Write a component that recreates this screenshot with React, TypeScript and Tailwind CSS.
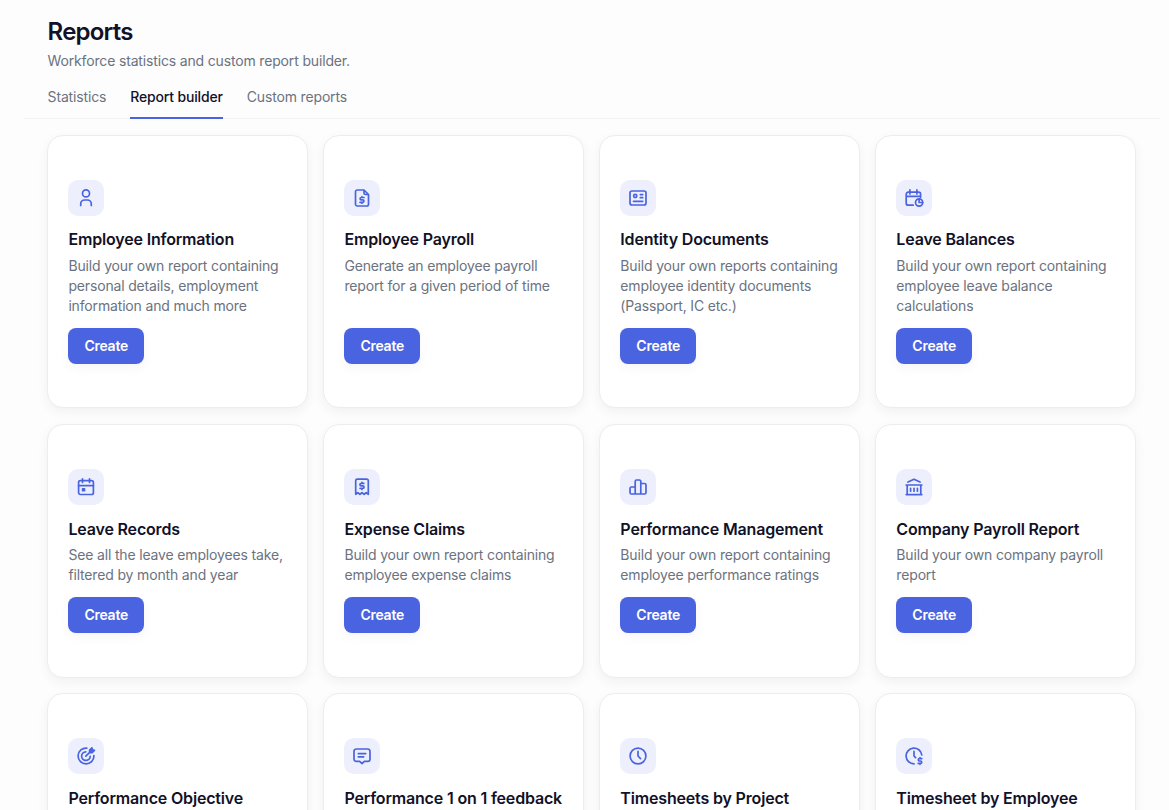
import { ReactNode } from "react";

function Icon({ children }: { children: ReactNode }) {
  return (
    <svg
      viewBox="0 0 20 20"
      className="h-5 w-5"
      fill="none"
      stroke="currentColor"
      strokeWidth="1.7"
      strokeLinecap="round"
      strokeLinejoin="round"
    >
      {children}
    </svg>
  );
}

const icons = {
  person: (
    <Icon>
      <circle cx="10" cy="5.4" r="3.5" />
      <path d="M4.7 17.5v-1.6a3.9 3.9 0 0 1 3.9-3.9h2.8a3.9 3.9 0 0 1 3.9 3.9v1.6" />
    </Icon>
  ),
  payroll: (
    <Icon>
      <path d="M12 2H5.2a1.7 1.7 0 0 0-1.7 1.7v12.6A1.7 1.7 0 0 0 5.2 18h9.6a1.7 1.7 0 0 0 1.7-1.7V6.5L12 2Zm0 0v3a1.5 1.5 0 0 0 1.5 1.5h3" />
      <path d="M12 9.5H9.3a1.2 1.2 0 0 0 0 2.4h1.4a1.2 1.2 0 0 1 0 2.4H8M10 8.6v.9m0 4.8v.9" />
    </Icon>
  ),
  identity: (
    <Icon>
      <rect x="2" y="3" width="16" height="14" rx="2" />
      <circle cx="7.2" cy="8" r="1.6" />
      <path d="M12.3 6.6h2.4m-2.4 3.1h2.4M5.5 13.3h9.2" />
    </Icon>
  ),
  balance: (
    <Icon>
      <path d="M9.2 17.2H4.2a2 2 0 0 1-2-2v-9a2 2 0 0 1 2-2h10.4a2 2 0 0 1 2 2v3M2.2 8.3h14.4M5.9 1.9v4m7-4v4" />
      <circle cx="15.1" cy="14.5" r="3.6" />
      <path d="M15.1 11v3.5h3.5" />
    </Icon>
  ),
  calendar: (
    <Icon>
      <rect x="2.6" y="3.7" width="14.8" height="13.8" rx="1.8" />
      <path d="M2.6 8.6h14.8M6.5 1.8v3.7m7-3.7v3.7" />
      <path d="M6.6 11.8h1.9v1.9H6.6z" fill="currentColor" />
    </Icon>
  ),
  receipt: (
    <Icon>
      <path d="M3.7 17.3V3.7a1.6 1.6 0 0 1 1.6-1.6h9.4a1.6 1.6 0 0 1 1.6 1.6v13.6l-2.1-1.6-2.1 1.6-2.1-1.6-2.1 1.6-2.1-1.6-2.1 1.6Z" />
      <path d="M11.8 6.4H9.2a1.25 1.25 0 0 0 0 2.5h1.6a1.25 1.25 0 0 1 0 2.5H8.1M10 5.3v1.1m0 5v1.1" />
    </Icon>
  ),
  chart: (
    <Icon>
      <path d="M7.2 17V4.4A1.4 1.4 0 0 1 8.6 3h2.8a1.4 1.4 0 0 1 1.4 1.4V17M7.2 10H3.4A1.4 1.4 0 0 0 2 11.4v4.2A1.4 1.4 0 0 0 3.4 17h13.2a1.4 1.4 0 0 0 1.4-1.4V7.9a1.4 1.4 0 0 0-1.4-1.4h-3.8" />
    </Icon>
  ),
  bank: (
    <Icon>
      <path d="M4 5.1 10 2.2l6 2.9M2.2 8h15.6M2.2 17.6h15.6M3.2 8v9.6M16.8 8v9.6M6.6 11.3v2.9m3.4-2.9v2.9m3.4-2.9v2.9" />
    </Icon>
  ),
  objective: (
    <Icon>
      <path d="M10.8 2.1A7.9 7.9 0 1 0 17.9 9.5" />
      <path d="M9.8 5.8A4.3 4.3 0 1 0 14.2 10.4" />
      <path d="M9.8 10.2 15.8 4.3M13.6 6.4V4.1l2.3-2.3.5 2 2 .5-2.3 2.3Z" />
    </Icon>
  ),
  feedback: (
    <Icon>
      <path d="M4.2 3h11.6a2.2 2.2 0 0 1 2.2 2.2v8a2.2 2.2 0 0 1-2.2 2.2h-3.4L10 17.5l-2.4-2.1H4.2A2.2 2.2 0 0 1 2 13.2v-8A2.2 2.2 0 0 1 4.2 3Z" />
      <path d="M6.3 7.6h7.4m-7.4 3.2h5.4" />
    </Icon>
  ),
  clock: (
    <Icon>
      <circle cx="10" cy="10" r="7.9" />
      <path d="M10 5.4V10l2.5 2.7" />
    </Icon>
  ),
  clockMoney: (
    <Icon>
      <path d="M17.8 8.8A7.9 7.9 0 1 0 10 17.9" />
      <path d="M10 5.4V10l1.6 1.7M17.8 12.6h-2.3a1.2 1.2 0 0 0 0 2.4h1a1.2 1.2 0 0 1 0 2.4h-2.3M16 11.7v.9m0 4.8v.9" />
    </Icon>
  ),
};

type Report = {
  icon: keyof typeof icons;
  title: string;
  description?: string;
};

const reports: Report[] = [
  {
    icon: "person",
    title: "Employee Information",
    description:
      "Build your own report containing personal details, employment information and much more",
  },
  {
    icon: "payroll",
    title: "Employee Payroll",
    description: "Generate an employee payroll report for a given period of time",
  },
  {
    icon: "identity",
    title: "Identity Documents",
    description:
      "Build your own reports containing employee identity documents (Passport, IC etc.)",
  },
  {
    icon: "balance",
    title: "Leave Balances",
    description: "Build your own report containing employee leave balance calculations",
  },
  {
    icon: "calendar",
    title: "Leave Records",
    description: "See all the leave employees take, filtered by month and year",
  },
  {
    icon: "receipt",
    title: "Expense Claims",
    description: "Build your own report containing employee expense claims",
  },
  {
    icon: "chart",
    title: "Performance Management",
    description: "Build your own report containing employee performance ratings",
  },
  {
    icon: "bank",
    title: "Company Payroll Report",
    description: "Build your own company payroll report",
  },
  { icon: "objective", title: "Performance Objective" },
  { icon: "feedback", title: "Performance 1 on 1 feedback" },
  { icon: "clock", title: "Timesheets by Project" },
  { icon: "clockMoney", title: "Timesheet by Employee" },
];

const tabs = ["Statistics", "Report builder", "Custom reports"];

function ReportCard({ icon, title, description }: Report) {
  return (
    <article className="flex min-h-[253px] flex-col items-start rounded-2xl border border-[#ededf0] bg-white px-5 pb-[43.9px] pt-[43.7px] shadow-[0_4px_12px_rgba(0,0,0,0.05)]">
      <div className="flex h-9 w-9 items-center justify-center rounded-[10px] bg-[#edf0fc] text-[#4a63e0]">
        {icons[icon]}
      </div>
      <h2 className="mt-[11.8px] whitespace-nowrap text-base font-semibold tracking-[-0.17px] text-[#111127]">
        {title}
      </h2>
      {description && (
        <>
          <p className="mb-3 mt-[4.2px] grow text-sm tracking-[-0.16px] text-[#6b7280]">
            {description}
          </p>
          <button className="h-9 rounded-lg bg-[#4a63e0] px-4 text-sm font-semibold tracking-[-0.25px] text-white shadow-[0_4px_12px_rgba(0,0,0,0.04)]">
            Create
          </button>
        </>
      )}
    </article>
  );
}

export default function App() {
  return (
    <main className="h-[810px] overflow-hidden bg-[#fdfdfd] font-['Inter',sans-serif]">
      <header className="ml-6 mr-[9px] border-b border-[#f3f3f4] pl-[23.6px] pr-6 pt-4">
        <h1 className="text-2xl font-semibold tracking-[-0.8px] text-[#111127]">Reports</h1>
        <p className="mt-[3px] text-sm tracking-[-0.16px] text-[#6b7280]">
          Workforce statistics and custom report builder.
        </p>
        <nav className="-mb-px mt-4 flex gap-6">
          {tabs.map((tab) => (
            <button
              key={tab}
              className={
                tab === "Report builder"
                  ? "h-8 border-b-2 border-[#4a63e0] pb-2.5 text-sm font-medium tracking-[-0.16px] text-[#111127]"
                  : "h-8 border-b-2 border-transparent pb-2.5 text-sm tracking-[-0.16px] text-[#6b7280]"
              }
            >
              {tab}
            </button>
          ))}
        </nav>
      </header>
      <section className="grid grid-cols-[repeat(4,260.3px)] gap-x-[15.7px] gap-y-[15.6px] pl-[47.4px] pt-[15.9px]">
        {reports.map((report) => (
          <ReportCard key={report.title} {...report} />
        ))}
      </section>
    </main>
  );
}
